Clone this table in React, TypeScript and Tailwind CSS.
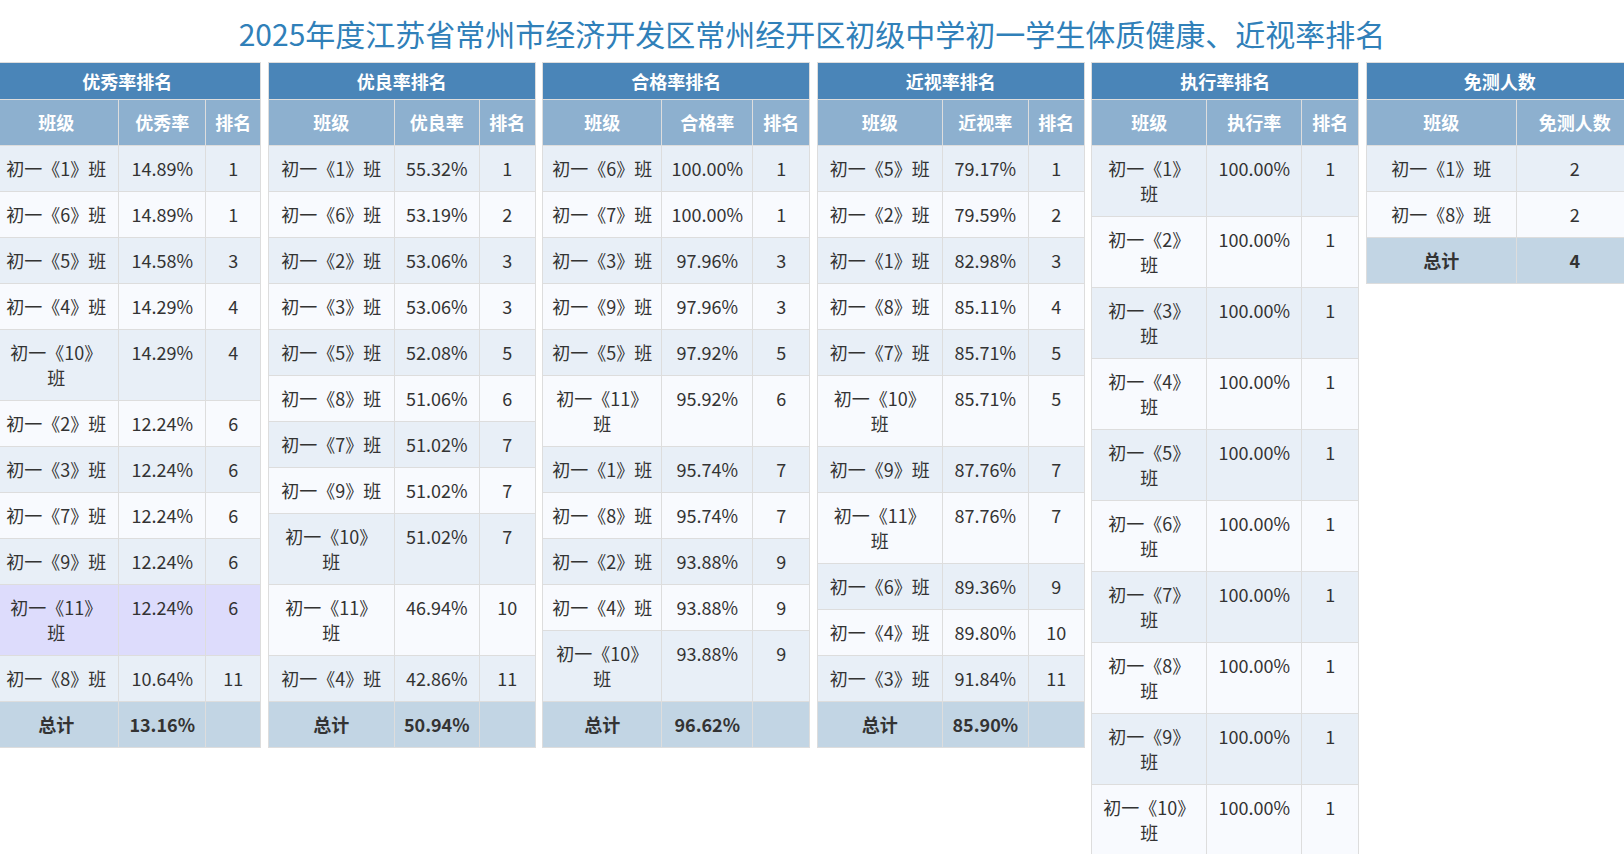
type Row = { cls: string; value: string; rank?: string; wrap?: boolean; hl?: boolean };

interface RankTable {
  title: string;
  cols: string[];
  widths: string[];
  rows: Row[];
  total: string;
}

const r = (cls: string, value: string, rank: string, wrap = false, hl = false): Row => ({ cls, value, rank, wrap, hl });

const TABLES: RankTable[] = [
  {
    title: '优秀率排名',
    cols: ['班级', '优秀率', '排名'],
    widths: ['w-[125px]', 'w-[87px]', 'w-[55px]'],
    rows: [
      r('1', '14.89%', '1'), r('6', '14.89%', '1'), r('5', '14.58%', '3'), r('4', '14.29%', '4'),
      r('10', '14.29%', '4', true), r('2', '12.24%', '6'), r('3', '12.24%', '6'), r('7', '12.24%', '6'),
      r('9', '12.24%', '6'), r('11', '12.24%', '6', true, true), r('8', '10.64%', '11'),
    ],
    total: '13.16%',
  },
  {
    title: '优良率排名',
    cols: ['班级', '优良率', '排名'],
    widths: ['w-[126px]', 'w-[85px]', 'w-[56px]'],
    rows: [
      r('1', '55.32%', '1'), r('6', '53.19%', '2'), r('2', '53.06%', '3'), r('3', '53.06%', '3'),
      r('5', '52.08%', '5'), r('8', '51.06%', '6'), r('7', '51.02%', '7'), r('9', '51.02%', '7'),
      r('10', '51.02%', '7', true), r('11', '46.94%', '10', true), r('4', '42.86%', '11'),
    ],
    total: '50.94%',
  },
  {
    title: '合格率排名',
    cols: ['班级', '合格率', '排名'],
    widths: ['w-[119px]', 'w-[91px]', 'w-[57px]'],
    rows: [
      r('6', '100.00%', '1'), r('7', '100.00%', '1'), r('3', '97.96%', '3'), r('9', '97.96%', '3'),
      r('5', '97.92%', '5'), r('11', '95.92%', '6', true), r('1', '95.74%', '7'), r('8', '95.74%', '7'),
      r('2', '93.88%', '9'), r('4', '93.88%', '9'), r('10', '93.88%', '9', true),
    ],
    total: '96.62%',
  },
  {
    title: '近视率排名',
    cols: ['班级', '近视率', '排名'],
    widths: ['w-[125px]', 'w-[86px]', 'w-[56px]'],
    rows: [
      r('5', '79.17%', '1'), r('2', '79.59%', '2'), r('1', '82.98%', '3'), r('8', '85.11%', '4'),
      r('7', '85.71%', '5'), r('10', '85.71%', '5', true), r('9', '87.76%', '7'), r('11', '87.76%', '7', true),
      r('6', '89.36%', '9'), r('4', '89.80%', '10'), r('3', '91.84%', '11'),
    ],
    total: '85.90%',
  },
  {
    title: '执行率排名',
    cols: ['班级', '执行率', '排名'],
    widths: ['w-[115px]', 'w-[95px]', 'w-[57px]'],
    rows: ['1', '2', '3', '4', '5', '6', '7', '8', '9', '10', '11'].map((c) => r(c, '100.00%', '1', true)),
    total: '100.00%',
  },
  {
    title: '免测人数',
    cols: ['班级', '免测人数'],
    widths: ['w-[150px]', 'w-[117px]'],
    rows: [
      { cls: '1', value: '2' },
      { cls: '8', value: '2' },
    ],
    total: '4',
  },
];

const cell = 'border border-[#dddddd] px-[8px] py-[10px] leading-[25px] align-top whitespace-nowrap';

function Table({ t }: { t: RankTable }) {
  const span = t.cols.length;
  return (
    <table className="w-[267px] shrink-0 table-fixed border-collapse border border-[#dddddd] text-center text-[18px] text-[#333333]">
      <colgroup>
        {t.widths.map((w, i) => (
          <col key={i} className={w} />
        ))}
      </colgroup>
      <thead>
        <tr className="bg-[#4a85b8] text-white">
          <th colSpan={span} className="border border-[#dddddd] py-[6px] leading-[24px] font-bold">
            {t.title}
          </th>
        </tr>
        <tr className="bg-[#8db0cf] text-white">
          {t.cols.map((c) => (
            <th key={c} className="border border-[#dddddd] py-[10px] leading-[25px] font-bold whitespace-nowrap">
              {c}
            </th>
          ))}
        </tr>
      </thead>
      <tbody>
        {t.rows.map((row, i) => {
          const bg = row.hl ? 'bg-[#dddcfc]' : i % 2 === 0 ? 'bg-[#e8eff7]' : 'bg-[#f8fafe]';
          return (
            <tr key={row.cls} className={bg}>
              <td className={cell}>
                初一《{row.cls}》{row.wrap && <br />}班
              </td>
              <td className={cell}>{row.value}</td>
              {row.rank !== undefined && <td className={cell}>{row.rank}</td>}
            </tr>
          );
        })}
        <tr className="bg-[#c2d5e4] font-bold">
          <td className={cell}>总计</td>
          <td className={cell}>{t.total}</td>
          {span === 3 && <td className={cell}></td>}
        </tr>
      </tbody>
    </table>
  );
}

export default function App() {
  return (
    <div
      className="h-screen w-full overflow-hidden bg-white"
      style={{ fontFamily: '"Noto Sans CJK SC", "Noto Sans", sans-serif' }}
    >
      <h1 className="pt-[15px] text-center text-[30px] leading-[36px] font-normal text-[#3080b9]">
        2025年度江苏省常州市经济开发区常州经开区初级中学初一学生体质健康、近视率排名
      </h1>
      <div className="mt-[11px] flex w-full items-start justify-center gap-[6.5px] pl-[3px]">
        {TABLES.map((t) => (
          <Table key={t.title} t={t} />
        ))}
      </div>
    </div>
  );
}
